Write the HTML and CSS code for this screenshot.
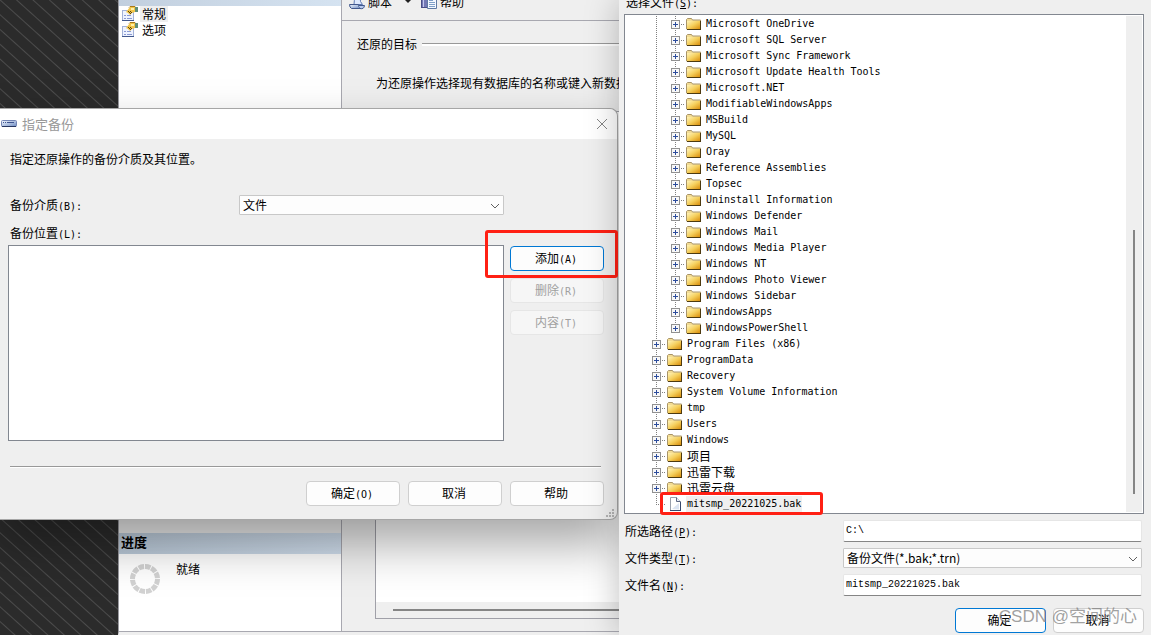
FILE: index.html
```html
<!DOCTYPE html>
<html lang="zh-CN">
<head>
    <meta charset="UTF-8">
    <meta name="viewport" content="width=device-width, initial-scale=1.0">
    <title>指定备份</title>
    <link rel="stylesheet" href="styles.css">
</head>
<body>

    <!-- shared icons -->
    <svg class="sprite" aria-hidden="true">
        <defs>
            <linearGradient id="gold" x1="0" y1="0" x2="1" y2="1">
                <stop offset="0" stop-color="#fff3b8"/>
                <stop offset="0.5" stop-color="#f5cf5c"/>
                <stop offset="1" stop-color="#d98e0c"/>
            </linearGradient>
            <linearGradient id="steel" x1="0" y1="0" x2="1" y2="1">
                <stop offset="0" stop-color="#f4f8ff"/>
                <stop offset="1" stop-color="#6f8dc4"/>
            </linearGradient>
        </defs>
        <symbol id="plus" viewBox="0 0 9 9">
            <rect x="0.5" y="0.5" width="8" height="8" fill="#f8f8f8" stroke="#919191"/>
            <path d="M2 4.5h5M4.5 2v5" stroke="#2c4c9c"/>
        </symbol>
        <symbol id="folder" viewBox="0 0 16 16">
            <path d="M0.5 13V3.500l1-1h4l1 1.500h8v9z" fill="#f3dc94" stroke="#a89468"/>
            <rect x="1" y="5" width="13" height="8" fill="url(#gold)"/>
            <path d="M1 13.500h14M14.500 5v9" fill="none" stroke="#4d3a10"/>
        </symbol>
        <symbol id="file" viewBox="0 0 16 16">
            <path d="M3.500 1.500h6l4 4v9h-10z" fill="#fff" stroke="#9aa0ac"/>
            <path d="M5 13L12 7v6.500z" fill="#dbe4f2"/>
            <path d="M9.500 1.500v4h4" fill="#e6ecf6" stroke="#5d6884"/>
            <path d="M3 14.500h11M13.500 6v9" fill="none" stroke="#36486c"/>
        </symbol>
        <symbol id="props" viewBox="0 0 16 16">
            <rect x="0.5" y="4.500" width="11" height="10" fill="#eef3ff" stroke="#a3b2d8"/>
            <path d="M0 14.500h12" stroke="#42588c"/>
            <path d="M2 9.500h2M5 9.500h4M2 12.500h2M5 12.500h5" stroke="#8a9ad4"/>
            <path d="M4 6l4-5h5v5l-3 1-2 2-2-2z" fill="#f2c548"/>
            <path d="M7 1.500l1-1h5l1 1" fill="none" stroke="#a87918"/>
            <path d="M6 5h1v1H6zM8 5h1v1H8zM7 6h1v1H7zM9 6h1v1H9zM8 7h1v1H8z" fill="#5c4510"/>
            <path d="M9 2h3v2H9z" fill="#fff0a8"/>
            <path d="M13 1h3v5h-3z" fill="#5f8d76"/>
        </symbol>
        <symbol id="script" viewBox="0 0 16 16">
            <path d="M4.500 1.500h8q-2 3-1 6l2 3H5q1-4-0.500-9z" fill="#dfeaff" stroke="#5f7ab4"/>
            <path d="M0.500 10.500h9q0 3 2 4h-9q-2-1-2-4z" fill="url(#steel)" stroke="#42588c"/>
            <path d="M11 14.500q4 1 4.500-3H10" fill="#b7caf0" stroke="#42588c"/>
        </symbol>
        <symbol id="book" viewBox="0 0 16 16">
            <rect x="0.5" y="0.5" width="6" height="13" fill="#7378b4" stroke="#494e86"/>
            <path d="M2.500 1v12" stroke="#c3c7ee"/>
            <path d="M6.500 2.500h6l3 3v9h-9z" fill="#f4f8ff" stroke="#5f7aa4"/>
            <path d="M8 6.500h4M8 8.500h6M8 10.500h6M8 12.500h6" stroke="#7fa0c8"/>
        </symbol>
        <symbol id="disk" viewBox="0 0 16 8">
            <rect x="0.5" y="0.5" width="15" height="6" rx="1" fill="url(#steel)" stroke="#7485b4"/>
            <path d="M2 2.500h1M4 2.500h1M6 2.500h7" stroke="#3f5590"/>
            <path d="M1 6.500h14" stroke="#26355f"/>
        </symbol>
        <symbol id="close" viewBox="0 0 10 10">
            <path d="M0 0l10 10M10 0L0 10" stroke="#858585"/>
        </symbol>
        <symbol id="chevron" viewBox="0 0 10 6">
            <path d="M1 1l4 4 4-4" fill="none" stroke="#606060"/>
        </symbol>
    </svg>

    <div class="desktop">

        <!-- restore database window -->
        <section class="restore">
            <aside class="pages">
                <div class="pages-head"></div>
                <ul class="page-list">
                    <li><svg class="icon"><use href="#props"/></svg><span class="current">常规</span></li>
                    <li><svg class="icon"><use href="#props"/></svg><span>选项</span></li>
                </ul>
                <div class="progress">
                    <h2>进度</h2>
                    <div class="progress-body">
                        <svg class="spinner" viewBox="0 0 30 30">
                            <circle cx="15" cy="15" r="12.500" fill="none" stroke="#d2d2d2" stroke-width="5" pathLength="120" stroke-dasharray="8.500 1.500"/>
                        </svg>
                        <span>就绪</span>
                    </div>
                </div>
            </aside>
            <div class="restore-main">
                <div class="toolbar">
                    <svg class="icon"><use href="#script"/></svg>
                    <span>脚本</span>
                    <span class="caret"></span>
                    <svg class="icon"><use href="#book"/></svg>
                    <span>帮助</span>
                </div>
                <div class="group-title"><span>还原的目标</span></div>
                <p class="hint">为还原操作选择现有数据库的名称或键入新数据库名称。</p>
                <div class="grid-pane">
                    <div class="hscroll"><div class="thumb"></div></div>
                </div>
            </div>
        </section>

        <!-- specify backup dialog -->
        <section class="backup">
            <header class="titlebar">
                <svg class="disk"><use href="#disk"/></svg>
                <h1>指定备份</h1>
                <button class="close" aria-label="关闭"><svg><use href="#close"/></svg></button>
            </header>
            <form class="backup-body">
                <p>指定还原操作的备份介质及其位置。</p>
                <div class="media-row">
                    <label for="media">备份介质<span class="en">(B):</span></label>
                    <div class="combo">
                        <select id="media"><option>文件</option></select>
                        <svg><use href="#chevron"/></svg>
                    </div>
                </div>
                <label class="loc-label" for="locations">备份位置<span class="en">(L):</span></label>
                <div class="loc-row">
                    <select id="locations" class="locations" size="10"></select>
                    <div class="side-buttons">
                        <button type="button" class="btn primary">添加<span class="en">(A)</span></button>
                        <button type="button" class="btn" disabled>删除<span class="en">(R)</span></button>
                        <button type="button" class="btn" disabled>内容<span class="en">(T)</span></button>
                        <span class="mark mark-add"></span>
                    </div>
                </div>
                <hr>
                <div class="actions">
                    <button type="button" class="btn">确定<span class="en">(O)</span></button>
                    <button type="button" class="btn">取消</button>
                    <button type="button" class="btn">帮助</button>
                </div>
            </form>
            <svg class="grip" viewBox="0 0 9 9">
                <path d="M6 1h2M3 4h2M6 4h2M0 7h2M3 7h2M6 7h2" stroke="#b4b4b4" stroke-width="2"/>
            </svg>
        </section>

        <!-- locate backup file window -->
        <section class="locate">
            <div class="tree-label">选择文件<span class="en">(<u>S</u>):</span></div>
            <div class="tree-box">
                <ul class="tree">
                    <li>
                        <ul>
                            <li class="row"><svg class="plus"><use href="#plus"/></svg><svg class="icon"><use href="#folder"/></svg><span class="en">Microsoft OneDrive</span></li>
                            <li class="row"><svg class="plus"><use href="#plus"/></svg><svg class="icon"><use href="#folder"/></svg><span class="en">Microsoft SQL Server</span></li>
                            <li class="row"><svg class="plus"><use href="#plus"/></svg><svg class="icon"><use href="#folder"/></svg><span class="en">Microsoft Sync Framework</span></li>
                            <li class="row"><svg class="plus"><use href="#plus"/></svg><svg class="icon"><use href="#folder"/></svg><span class="en">Microsoft Update Health Tools</span></li>
                            <li class="row"><svg class="plus"><use href="#plus"/></svg><svg class="icon"><use href="#folder"/></svg><span class="en">Microsoft.NET</span></li>
                            <li class="row"><svg class="plus"><use href="#plus"/></svg><svg class="icon"><use href="#folder"/></svg><span class="en">ModifiableWindowsApps</span></li>
                            <li class="row"><svg class="plus"><use href="#plus"/></svg><svg class="icon"><use href="#folder"/></svg><span class="en">MSBuild</span></li>
                            <li class="row"><svg class="plus"><use href="#plus"/></svg><svg class="icon"><use href="#folder"/></svg><span class="en">MySQL</span></li>
                            <li class="row"><svg class="plus"><use href="#plus"/></svg><svg class="icon"><use href="#folder"/></svg><span class="en">Oray</span></li>
                            <li class="row"><svg class="plus"><use href="#plus"/></svg><svg class="icon"><use href="#folder"/></svg><span class="en">Reference Assemblies</span></li>
                            <li class="row"><svg class="plus"><use href="#plus"/></svg><svg class="icon"><use href="#folder"/></svg><span class="en">Topsec</span></li>
                            <li class="row"><svg class="plus"><use href="#plus"/></svg><svg class="icon"><use href="#folder"/></svg><span class="en">Uninstall Information</span></li>
                            <li class="row"><svg class="plus"><use href="#plus"/></svg><svg class="icon"><use href="#folder"/></svg><span class="en">Windows Defender</span></li>
                            <li class="row"><svg class="plus"><use href="#plus"/></svg><svg class="icon"><use href="#folder"/></svg><span class="en">Windows Mail</span></li>
                            <li class="row"><svg class="plus"><use href="#plus"/></svg><svg class="icon"><use href="#folder"/></svg><span class="en">Windows Media Player</span></li>
                            <li class="row"><svg class="plus"><use href="#plus"/></svg><svg class="icon"><use href="#folder"/></svg><span class="en">Windows NT</span></li>
                            <li class="row"><svg class="plus"><use href="#plus"/></svg><svg class="icon"><use href="#folder"/></svg><span class="en">Windows Photo Viewer</span></li>
                            <li class="row"><svg class="plus"><use href="#plus"/></svg><svg class="icon"><use href="#folder"/></svg><span class="en">Windows Sidebar</span></li>
                            <li class="row"><svg class="plus"><use href="#plus"/></svg><svg class="icon"><use href="#folder"/></svg><span class="en">WindowsApps</span></li>
                            <li class="row last"><svg class="plus"><use href="#plus"/></svg><svg class="icon"><use href="#folder"/></svg><span class="en">WindowsPowerShell</span></li>
                        </ul>
                    </li>
                    <li class="row"><svg class="plus"><use href="#plus"/></svg><svg class="icon"><use href="#folder"/></svg><span class="en">Program Files (x86)</span></li>
                    <li class="row"><svg class="plus"><use href="#plus"/></svg><svg class="icon"><use href="#folder"/></svg><span class="en">ProgramData</span></li>
                    <li class="row"><svg class="plus"><use href="#plus"/></svg><svg class="icon"><use href="#folder"/></svg><span class="en">Recovery</span></li>
                    <li class="row"><svg class="plus"><use href="#plus"/></svg><svg class="icon"><use href="#folder"/></svg><span class="en">System Volume Information</span></li>
                    <li class="row"><svg class="plus"><use href="#plus"/></svg><svg class="icon"><use href="#folder"/></svg><span class="en">tmp</span></li>
                    <li class="row"><svg class="plus"><use href="#plus"/></svg><svg class="icon"><use href="#folder"/></svg><span class="en">Users</span></li>
                    <li class="row"><svg class="plus"><use href="#plus"/></svg><svg class="icon"><use href="#folder"/></svg><span class="en">Windows</span></li>
                    <li class="row"><svg class="plus"><use href="#plus"/></svg><svg class="icon"><use href="#folder"/></svg><span>项目</span></li>
                    <li class="row"><svg class="plus"><use href="#plus"/></svg><svg class="icon"><use href="#folder"/></svg><span>迅雷下载</span></li>
                    <li class="row"><svg class="plus"><use href="#plus"/></svg><svg class="icon"><use href="#folder"/></svg><span>迅雷云盘</span></li>
                    <li class="row last leaf"><svg class="icon"><use href="#file"/></svg><span class="en current">mitsmp_20221025.bak</span><span class="mark mark-file"></span></li>
                </ul>
                <div class="vscroll"><div class="thumb"></div></div>
            </div>
            <form class="fields">
                <label for="path">所选路径<span class="en">(<u>P</u>):</span></label>
                <input id="path" type="text" value="C:\">
                <label for="type">文件类型<span class="en">(<u>T</u>):</span></label>
                <div class="combo">
                    <select id="type"><option>备份文件(*.bak;*.trn)</option></select>
                    <svg><use href="#chevron"/></svg>
                </div>
                <label for="name">文件名<span class="en">(<u>N</u>):</span></label>
                <input id="name" type="text" value="mitsmp_20221025.bak">
            </form>
            <div class="actions">
                <button type="button" class="btn primary">确定</button>
                <button type="button" class="btn">取消</button>
            </div>
            <div class="watermark">CSDN @空间的心</div>
        </section>

    </div>

</body>
</html>
```
FILE: styles.css
```css
* {
    box-sizing: border-box;
}
body {
    margin: 0;
    font: 12px/16px "Noto Sans CJK SC", sans-serif;
    color: #000;
}
h1, h2, p, ul {
    margin: 0;
    padding: 0;
}
ul {
    list-style: none;
}
.sprite {
    position: absolute;
    width: 0;
    height: 0;
}
.icon {
    width: 16px;
    height: 16px;
    flex: none;
}
.en {
    font-family: "DejaVu Sans Mono", monospace;
    font-size: 10px;
    line-height: 10px;
}
.current {
    background-color: #efefef;
}
.desktop {
    position: relative;
    display: flex;
    height: 100vh;
    min-height: 635px;
    padding-left: 118px;
    overflow: hidden;
    background: #2b2b2b repeating-linear-gradient(42deg, #2b2b2b 0, #2b2b2b 9px, #4c4c4c 10px, #2b2b2b 11px);
}

/* controls */
.btn {
    height: 25px;
    padding: 0 2px 1px 0;
    border: 1px solid #cfcfcf;
    border-radius: 4px;
    background-color: #fdfdfd;
    font: inherit;
    color: #000;
}
.btn.primary {
    border-color: #0078d4;
}
.btn:disabled {
    border-color: #e6e6e6;
    background-color: #f6f6f6;
    color: #a0a0a0;
}
.combo {
    position: relative;
    display: flex;
}
.combo select {
    flex: 1;
    height: 20px;
    padding: 0 3px;
    border: 1px solid #c8c8c8;
    border-radius: 1px;
    background-color: #fdfdfd;
    appearance: none;
    font: inherit;
    color: #000;
}
.combo svg {
    position: absolute;
    right: 4px;
    top: 8px;
    width: 10px;
    height: 6px;
    pointer-events: none;
}
.mark {
    position: absolute;
    border: 3px solid #ff2014;
    border-radius: 3px;
    pointer-events: none;
}
.thumb {
    flex: 1;
    background-color: #858585;
}

/* restore database window */
.restore {
    flex: 1;
    display: flex;
    min-width: 0;
    border-left: 1px solid #9a9aa0;
    border-bottom: 3px solid #efefef;
    background-color: #efefef;
}
.pages {
    display: flex;
    flex-direction: column;
    width: 223px;
    flex: none;
    border-right: 1px solid #a8a8b0;
    border-bottom: 1px solid #a8a8b0;
    background-color: #fff;
}
.pages-head {
    height: 6px;
    background: linear-gradient(to right, #c2cfde, #d5e3f1);
}
.page-list li {
    display: flex;
    gap: 2px;
    padding-left: 3px;
}
.page-list span {
    padding: 0 2px;
}
.progress {
    margin-top: auto;
    border-top: 14px solid #efefef;
}
.progress h2 {
    height: 21px;
    padding-left: 2px;
    background: linear-gradient(to right, #bccbda, #d2e0ef);
    font-size: 13px;
    line-height: 18px;
}
.progress-body {
    display: flex;
    gap: 16px;
    height: 77px;
    padding: 7px 11px;
}
.spinner {
    width: 30px;
    height: 30px;
    margin-top: 3px;
}
.restore-main {
    flex: 1;
    display: flex;
    flex-direction: column;
    min-width: 0;
    border-bottom: 1px solid #a8a8b0;
    white-space: nowrap;
}
.toolbar {
    display: flex;
    align-items: flex-end;
    height: 31px;
    margin-top: -10px;
    padding: 0 7px 10px;
    border-bottom: 1px solid #a8a8b0;
}
.toolbar span {
    margin-left: 3px;
}
.toolbar .caret {
    margin: 0 10px 7px 13px;
    border: 3px solid transparent;
    border-top-color: #202020;
    border-bottom: 0;
}
.group-title {
    display: flex;
    align-items: center;
    gap: 5px;
    margin-top: 15px;
    padding-left: 15px;
}
.group-title::after {
    content: "";
    flex: 1;
    height: 2px;
    border-top: 1px solid #999;
    background-color: #fff;
}
.hint {
    margin-top: 23px;
    padding-left: 34px;
}
.grid-pane {
    flex: 1;
    display: flex;
    align-items: flex-end;
    margin: 20px 0 12px 33px;
    border: 1px solid #a0a0a8;
    background-color: #fff;
}
.hscroll {
    flex: 1;
    display: flex;
    height: 16px;
    padding: 7px 0 7px 17px;
    background-color: #efefef;
}

/* specify backup dialog */
.backup {
    position: absolute;
    left: 0;
    top: 108px;
    width: 618px;
    border: 1px solid #a6a6a6;
    border-left: 0;
    border-radius: 0 8px 8px 0;
    background-color: #efefef;
    box-shadow: 0 24px 48px rgba(0, 0, 0, 0.35);
}
.titlebar {
    display: flex;
    align-items: center;
    height: 30px;
    padding: 0 10px 0 1px;
    border-radius: 0 8px 0 0;
    background-color: #fff;
}
.titlebar h1 {
    flex: 1;
    margin-left: 5px;
    font-size: 13px;
    font-weight: normal;
    color: #999;
}
.disk {
    width: 16px;
    height: 8px;
}
.close {
    padding: 0;
    border: 0;
    background: none;
}
.close svg {
    display: block;
    width: 10px;
    height: 10px;
}
.backup-body {
    padding: 12px 13px 13px 8px;
}
.backup-body p,
.backup-body label {
    padding-left: 2px;
}
.media-row {
    display: flex;
    align-items: center;
    margin-top: 28px;
}
.media-row label {
    width: 231px;
}
.media-row .combo {
    width: 265px;
}
.loc-label {
    display: block;
    margin: 10px 0 4px;
}
.loc-row {
    display: flex;
    gap: 6px;
}
.locations {
    flex: 1;
    height: 196px;
    border: 1px solid #828790;
    border-radius: 0;
    background-color: #fff;
}
.side-buttons {
    position: relative;
    display: flex;
    flex-direction: column;
    gap: 7px;
    width: 94px;
    padding-top: 1px;
}
.mark-add {
    left: -25px;
    top: -15px;
    width: 133px;
    height: 48px;
}
hr {
    height: 2px;
    margin: 25px 3px 13px 2px;
    border: 0;
    border-top: 1px solid #999;
    background-color: #fff;
}
.actions {
    display: flex;
    justify-content: flex-end;
    gap: 8px;
}
.backup .actions .btn {
    width: 94px;
}
.grip {
    position: absolute;
    right: 2px;
    bottom: 1px;
    width: 9px;
    height: 9px;
}

/* locate backup file window */
.locate {
    position: absolute;
    left: 619px;
    right: 0;
    top: 0;
    bottom: 0;
    padding: 0 7px 0 5px;
    background-color: #efefef;
    box-shadow: 0 0 32px rgba(0, 0, 0, 0.25);
}
.tree-label {
    margin-top: -6px;
    padding: 0 0 4px 2px;
}
.tree-box {
    display: flex;
    border: 1px solid #828790;
    background-color: #fff;
    padding: 1px;
}
.tree {
    flex: 1;
}
.row {
    position: relative;
    display: flex;
    align-items: center;
    height: 16px;
    padding-left: 26px;
    white-space: nowrap;
    background:
        repeating-linear-gradient(to bottom, #808080 0, #808080 1px, transparent 1px, transparent 2px) 30px 0 / 1px 100% no-repeat,
        repeating-linear-gradient(to right, #808080 0, #808080 1px, transparent 1px, transparent 2px) 30px 8px / 10px 1px no-repeat;
}
.row.last {
    background-size: 1px 8px, 10px 1px;
}
.tree ul {
    padding-left: 19px;
    background: repeating-linear-gradient(to bottom, #808080 0, #808080 1px, transparent 1px, transparent 2px) 30px 0 / 1px 100% no-repeat;
}
.plus {
    width: 9px;
    height: 9px;
    margin-right: 6px;
}
.row span {
    margin-left: 3px;
    padding: 0 1px;
}
.row .en {
    line-height: 16px;
}
.leaf .icon {
    margin-left: 15px;
}
.row .mark-file {
    left: 34px;
    top: -4px;
    width: 163px;
    height: 23px;
    margin: 0;
}
.vscroll {
    display: flex;
    width: 16px;
    padding: 214px 7px 18px;
    background-color: #efefef;
}
.fields {
    display: grid;
    grid-template-columns: 218px 1fr;
    align-items: center;
    row-gap: 6px;
    margin-top: 6px;
    padding: 0 2px 0 1px;
}
.fields input {
    width: 100%;
    height: 22px;
    padding: 0 2px 2px;
    border: 1px solid #e6e6e6;
    border-bottom-color: #858585;
    border-radius: 2px;
    background-color: #fff;
    font: 10px/16px "Liberation Mono", monospace;
}
.locate .actions {
    gap: 7px;
    margin-top: 12px;
}
.locate .actions .btn {
    width: 91px;
}
.watermark {
    position: absolute;
    right: 14px;
    bottom: 6px;
    font: 17px/24px "Liberation Sans", "Noto Sans CJK SC", sans-serif;
    color: rgba(120, 120, 120, 0.7);
    pointer-events: none;
}
```
